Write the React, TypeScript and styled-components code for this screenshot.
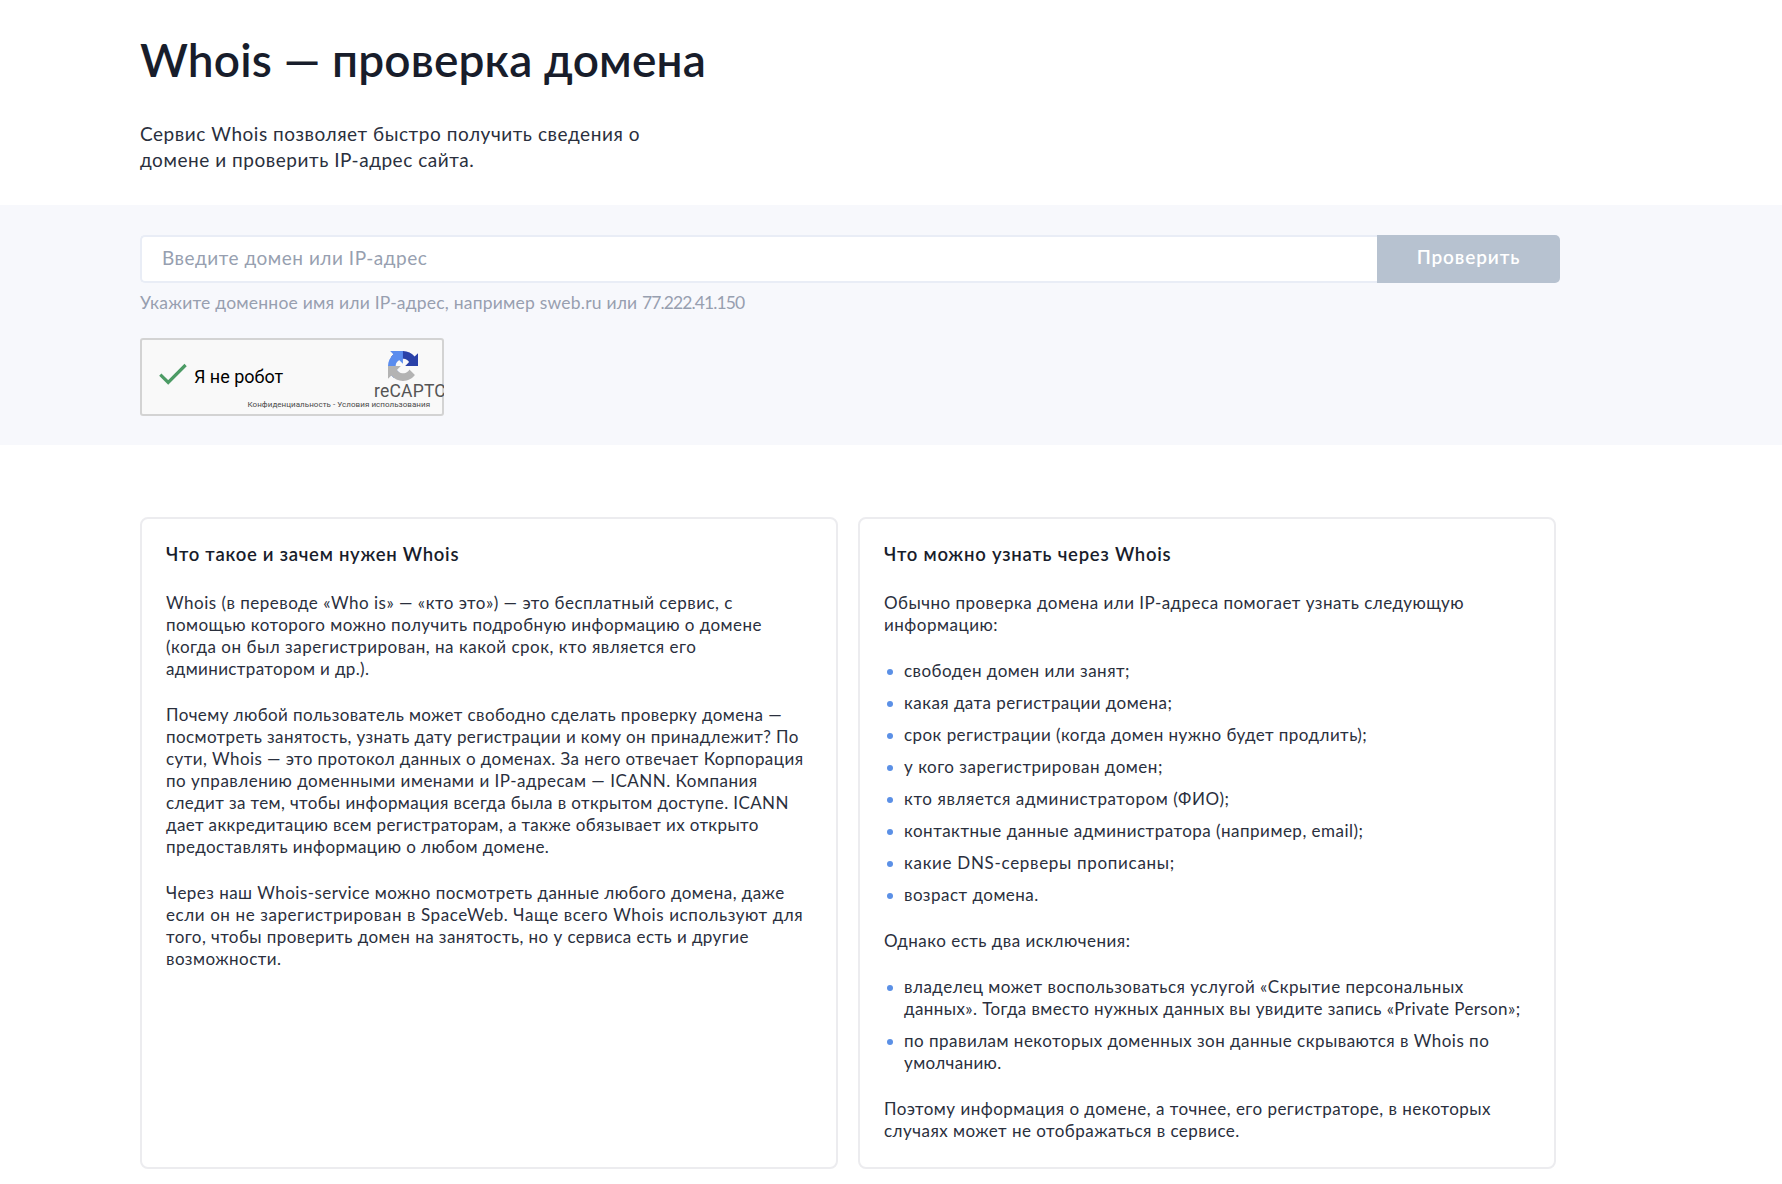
import React from 'react';
import styled, { createGlobalStyle } from 'styled-components';

const GlobalStyle = createGlobalStyle`
  *, *::before, *::after { box-sizing: border-box; }
  body {
    margin: 0;
    background: #fff;
    color: #2a2f3d;
    font-family: Lato, "Noto Sans", sans-serif;
  }
  h1, h2, p, ul { margin: 0; padding: 0; }
`;

const Header = styled.header`
  padding: 32px 140px 32px;
`;

const Title = styled.h1`
  font-size: 46px;
  font-weight: 600;
  line-height: 56px;
  letter-spacing: 0.16px;
  color: #181d2b;
`;

const Lead = styled.div`
  margin-top: 33px;
  font-size: 19px;
  line-height: 26px;
`;

const Line = styled.span<{ $tracking: number }>`
  display: block;
  white-space: nowrap;
  letter-spacing: ${(p) => p.$tracking}px;
`;

const CheckSection = styled.section`
  padding: 30px 140px 29px;
  background: #f7f8fc;
`;

const Form = styled.form`
  display: flex;
  width: 1420px;
  height: 48px;
`;

const DomainInput = styled.input`
  flex: 1;
  min-width: 0;
  padding: 0 20px 3px 20px;
  border: 2px solid #e9edf6;
  border-right: 0;
  border-radius: 5px 0 0 5px;
  background: #fff;
  font: 400 19px/26px Lato, "Noto Sans", sans-serif;
  letter-spacing: 0.522px;
  outline: none;
  &::placeholder { color: #979fb0; opacity: 1; }
`;

const SubmitButton = styled.button`
  width: 183px;
  padding: 0 0 5px;
  border: 0;
  border-radius: 0 5px 5px 0;
  background: #b7c2d0;
  color: #fff;
  font: 600 19px/26px Lato, "Noto Sans", sans-serif;
  letter-spacing: 0.89px;
`;

const Hint = styled.p`
  padding-top: 9px;
  font-size: 17.5px;
  line-height: 22px;
  letter-spacing: 0.21px;
  color: #979fb0;
`;

const Address = styled.span`
  letter-spacing: -0.9px;
`;

const Captcha = styled.div`
  width: 304px;
  height: 78px;
  margin-top: 24px;
  overflow: hidden;
  border-radius: 3px;
  background: #f9f9f9;
  box-shadow: inset 0 0 0 2px #d3d3d3;
  font-family: Roboto, sans-serif;
`;

const CaptchaMain = styled.div`
  display: flex;
  height: 62px;
  padding-left: 19px;
`;

const CheckMark = styled.svg`
  flex: none;
  width: 28px;
  height: 22px;
  margin-top: 25px;
`;

const CaptchaLabel = styled.span`
  width: 187px;
  margin-top: 27px;
  padding-left: 7px;
  flex: none;
  font-size: 18px;
  line-height: 24px;
  letter-spacing: -0.03px;
  color: #000;
`;

const CaptchaBrand = styled.div`
  flex: none;
  padding-top: 13px;
  font-size: 17.5px;
  line-height: 21px;
  letter-spacing: 0.2px;
  color: #555;
`;

const BrandLogo = styled.svg`
  display: block;
  width: 30px;
  height: 30px;
  margin-left: 14px;
`;

const CaptchaTerms = styled.div`
  padding-left: 107.5px;
  font-size: 8px;
  line-height: 10px;
  letter-spacing: 0.05px;
  white-space: nowrap;
  color: #4a4a4a;
`;

const Cards = styled.main`
  display: grid;
  grid-template-columns: 698px 698px;
  gap: 20px;
  padding: 72px 140px 15px;
`;

const Card = styled.article`
  padding: 23px 20px 25px 24px;
  border: 2px solid #ececef;
  border-radius: 8px;
  font-size: 17px;
  line-height: 22px;
`;

const CardTitle = styled.h2<{ $tracking: number }>`
  padding-bottom: 26px;
  font-size: 18.5px;
  font-weight: 600;
  line-height: 24px;
  letter-spacing: ${(p) => p.$tracking}px;
  color: #181d2b;
`;

const CardBody = styled.div`
  display: flex;
  flex-direction: column;
  gap: 24px;
`;

const List = styled.ul`
  display: flex;
  flex-direction: column;
  gap: 10px;
  list-style: none;
`;

const Item = styled.li`
  display: flex;
  &::before {
    content: '';
    flex: none;
    width: 6px;
    height: 6px;
    margin: 9px 11px 0 3px;
    border-radius: 50%;
    background: #5b90e6;
  }
`;

type TextLine = [text: string, tracking: number];

const about: TextLine[][] = [
  [
    ['Whois (в переводе «Who is» — «кто это») — это бесплатный сервис, с', 0.496],
    ['помощью которого можно получить подробную информацию о домене', 0.441],
    ['(когда он был зарегистрирован, на какой срок, кто является его', 0.513],
    ['администратором и др.).', 0.38],
  ],
  [
    ['Почему любой пользователь может свободно сделать проверку домена —', 0.408],
    ['посмотреть занятость, узнать дату регистрации и кому он принадлежит? По', 0.4],
    ['сути, Whois — это протокол данных о доменах. За него отвечает Корпорация', 0.428],
    ['по управлению доменными именами и IP-адресам — ICANN. Компания', 0.495],
    ['следит за тем, чтобы информация всегда была в открытом доступе. ICANN', 0.388],
    ['дает аккредитацию всем регистраторам, а также обязывает их открыто', 0.373],
    ['предоставлять информацию о любом домене.', 0.424],
  ],
  [
    ['Через наш Whois-service можно посмотреть данные любого домена, даже', 0.455],
    ['если он не зарегистрирован в SpaceWeb. Чаще всего Whois используют для', 0.593],
    ['того, чтобы проверить домен на занятость, но у сервиса есть и другие', 0.435],
    ['возможности.', 0.47],
  ],
];

const intro: TextLine[] = [
  ['Обычно проверка домена или IP-адреса помогает узнать следующую', 0.475],
  ['информацию:', 0.5],
];

const facts: TextLine[][] = [
  [['свободен домен или занят;', 0.455]],
  [['какая дата регистрации домена;', 0.447]],
  [['срок регистрации (когда домен нужно будет продлить);', 0.441]],
  [['у кого зарегистрирован домен;', 0.506]],
  [['кто является администратором (ФИО);', 0.595]],
  [['контактные данные администратора (например, email);', 0.499]],
  [['какие DNS-серверы прописаны;', 0.69]],
  [['возраст домена.', 0.48]],
];

const exceptions: TextLine[][] = [
  [
    ['владелец может воспользоваться услугой «Скрытие персональных', 0.505],
    ['данных». Тогда вместо нужных данных вы увидите запись «Private Person»;', 0.407],
  ],
  [
    ['по правилам некоторых доменных зон данные скрываются в Whois по', 0.48],
    ['умолчанию.', 0.372],
  ],
];

const outro: TextLine[] = [
  ['Поэтому информация о домене, а точнее, его регистраторе, в некоторых', 0.48],
  ['случаях может не отображаться в сервисе.', 0.47],
];

const Lines = ({ lines }: { lines: TextLine[] }) => (
  <>
    {lines.map(([text, tracking]) => (
      <Line key={text} $tracking={tracking}>{text}</Line>
    ))}
  </>
);

const BulletList = ({ items }: { items: TextLine[][] }) => (
  <List>
    {items.map((lines) => (
      <Item key={lines[0][0]}><div><Lines lines={lines} /></div></Item>
    ))}
  </List>
);

const RecaptchaLogo = () => (
  <BrandLogo viewBox="0 0 64 64">
    <path fill="#2a41a8" d="M64 31.955l-.033-1.37V4.687l-7.16 7.16C50.948 4.674 42.033.093 32.05.093c-10.4 0-19.622 4.96-25.458 12.64l11.736 11.86a15.55 15.55 0 0 1 4.754-5.334c2.05-1.6 4.952-2.906 8.968-2.906.485 0 .86.057 1.135.163 4.976.393 9.288 3.14 11.828 7.124l-8.307 8.307L64 31.953" />
    <path fill="#5a8cee" d="M31.862.094l-1.37.033H4.594l7.16 7.16C4.58 13.147 0 22.06 0 32.046c0 10.4 4.96 19.622 12.64 25.458L24.5 45.768a15.55 15.55 0 0 1-5.334-4.754c-1.6-2.05-2.906-4.952-2.906-8.968 0-.485.057-.86.163-1.135.393-4.976 3.14-9.288 7.124-11.828l8.307 8.307L31.86.095" />
    <path fill="#b3b3b3" d="M.001 32.045l.033 1.37v25.898l7.16-7.16c5.86 7.173 14.774 11.754 24.76 11.754 10.4 0 19.622-4.96 25.458-12.64l-11.736-11.86a15.55 15.55 0 0 1-4.754 5.334c-2.05 1.6-4.952 2.906-8.968 2.906-.485 0-.86-.057-1.135-.163-4.976-.393-9.288-3.14-11.828-7.124l8.307-8.307c-10.522.04-22.4.066-27.295-.005" />
  </BrandLogo>
);

export default function App() {
  return (
    <>
      <GlobalStyle />
      <Header>
        <Title>Whois — проверка домена</Title>
        <Lead>
          <Line $tracking={0.541}>Сервис Whois позволяет быстро получить сведения о</Line>
          <Line $tracking={0.541}>домене и проверить IP-адрес сайта.</Line>
        </Lead>
      </Header>
      <CheckSection>
        <Form onSubmit={(e) => e.preventDefault()}>
          <DomainInput placeholder="Введите домен или IP-адрес" />
          <SubmitButton type="submit">Проверить</SubmitButton>
        </Form>
        <Hint>
          Укажите доменное имя или IP-адрес, например sweb.ru или <Address>77.222.41.150</Address>
        </Hint>
        <Captcha>
          <CaptchaMain>
            <CheckMark viewBox="0 0 28 22">
              <path d="M1.3 11.6L9.2 19.4L26.6 2" fill="none" stroke="#4c9b65" strokeWidth="3.2" />
            </CheckMark>
            <CaptchaLabel>Я не робот</CaptchaLabel>
            <CaptchaBrand>
              <RecaptchaLogo />
              reCAPTCHA
            </CaptchaBrand>
          </CaptchaMain>
          <CaptchaTerms>Конфиденциальность - Условия использования</CaptchaTerms>
        </Captcha>
      </CheckSection>
      <Cards>
        <Card>
          <CardTitle $tracking={0.73}>Что такое и зачем нужен Whois</CardTitle>
          <CardBody>
            {about.map((lines) => (
              <p key={lines[0][0]}><Lines lines={lines} /></p>
            ))}
          </CardBody>
        </Card>
        <Card>
          <CardTitle $tracking={0.76}>Что можно узнать через Whois</CardTitle>
          <CardBody>
            <p><Lines lines={intro} /></p>
            <BulletList items={facts} />
            <p><Line $tracking={0.48}>Однако есть два исключения:</Line></p>
            <BulletList items={exceptions} />
            <p><Lines lines={outro} /></p>
          </CardBody>
        </Card>
      </Cards>
    </>
  );
}
